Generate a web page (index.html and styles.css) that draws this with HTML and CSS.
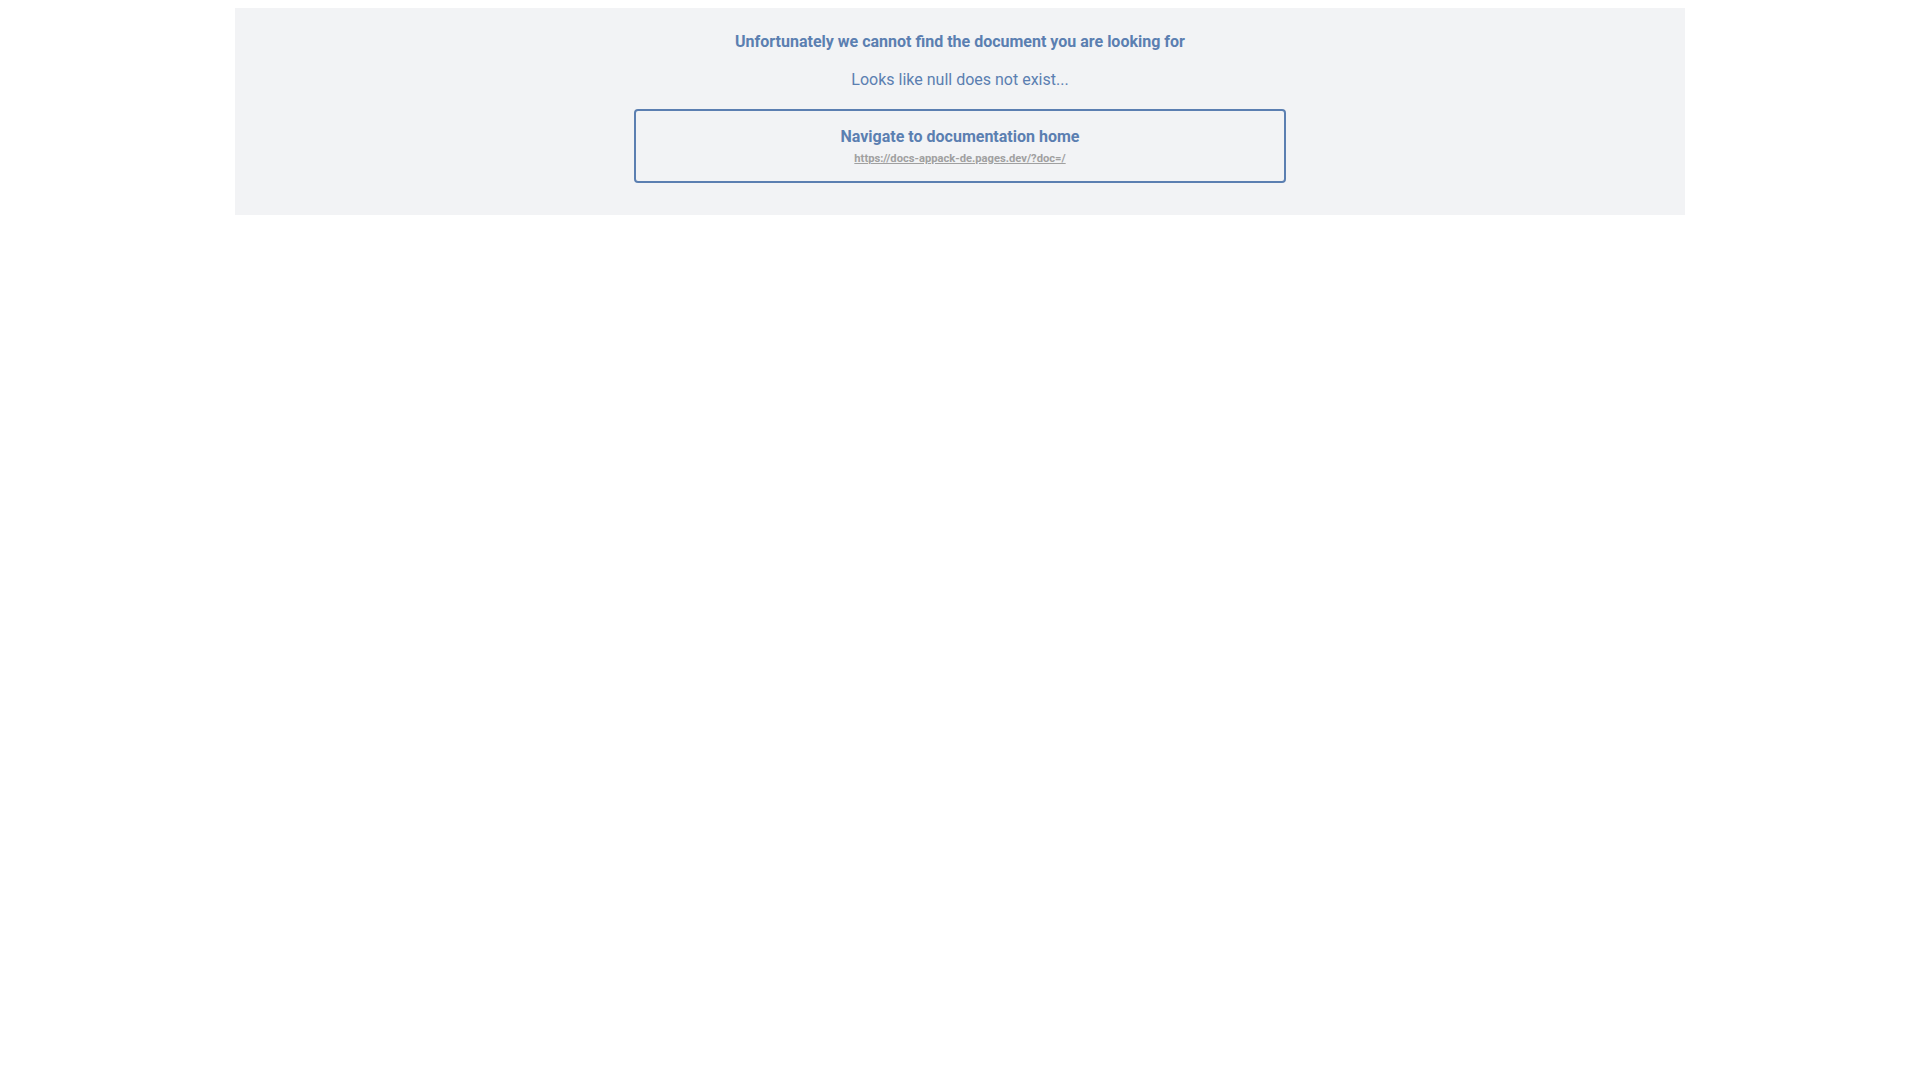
FILE: index.html
```html
<!DOCTYPE html>
<html lang="en">
<head>
<meta charset="utf-8">
<title>Document not found</title>
<link rel="stylesheet" href="styles.css">
</head>
<body>
<main class="notfound">
  <h1 class="nf-title">Unfortunately we cannot find the document you are looking for</h1>
  <p class="nf-sub">Looks like null does not exist...</p>
  <a class="nf-card" href="#">
    <span class="nf-card-title">Navigate to documentation home</span>
    <span class="nf-card-url">https://docs-appack-de.pages.dev/?doc=/</span>
  </a>
</main>
</body>
</html>
```

FILE: styles.css
```css
html, body {
  background: #ffffff;
}
body {
  margin: 8px;
  font-family: Roboto, "Liberation Sans", Arial, sans-serif;
}
.notfound {
  width: 1450px;
  margin: 0 auto;
  box-sizing: border-box;
  background: #f2f3f5;
  padding: 24px 0 32px;
  display: flex;
  flex-direction: column;
  align-items: center;
  color: #5b7fb1;
}
.nf-title {
  margin: 0 0 19px;
  font-size: 16px;
  line-height: 19px;
  font-weight: 700;
}
.nf-sub {
  margin: 0 0 20px;
  font-size: 16px;
  line-height: 19px;
  font-weight: 400;
}
.nf-card {
  width: 652px;
  box-sizing: border-box;
  border: 2px solid #5b7fb1;
  border-radius: 4px;
  padding: 16px 16px 16px;
  display: flex;
  flex-direction: column;
  align-items: center;
  text-decoration: none;
  color: #5b7fb1;
}
.nf-card-title {
  font-size: 16px;
  line-height: 19px;
  font-weight: 700;
}
.nf-card-url {
  margin-top: 6px;
  font-size: 11.2px;
  line-height: 13px;
  font-weight: 700;
  color: #a0a0a0;
  text-decoration: underline;
}
```
